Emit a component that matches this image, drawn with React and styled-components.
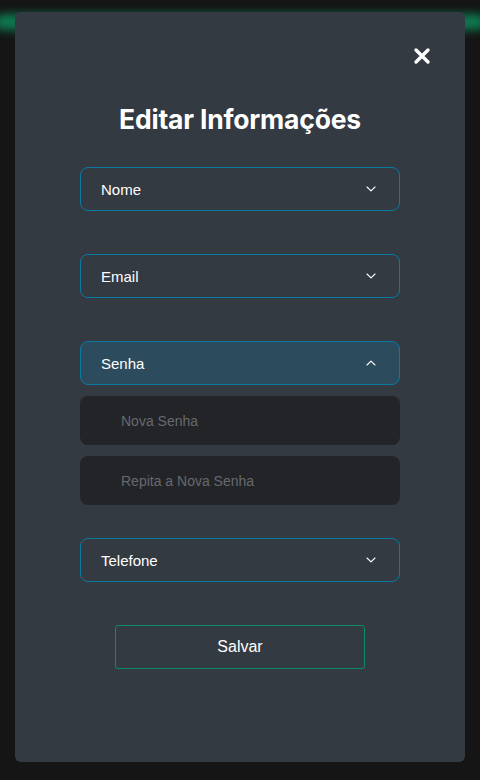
import React, { useState } from 'react';
import styled, { createGlobalStyle } from 'styled-components';

const GlobalStyle = createGlobalStyle`
  * {
    box-sizing: border-box;
  }
  body {
    margin: 0;
    background: #151515;
    font-family: 'Liberation Sans', Arial, sans-serif;
  }
`;

const Page = styled.div`
  position: relative;
  width: 480px;
  height: 780px;
  padding: 12px 15px 18px;
  overflow: hidden;
`;

// green header glow peeking out behind the modal
const Glow = styled.div`
  position: absolute;
  left: -6px;
  right: -6px;
  top: 14px;
  height: 16px;
  border-radius: 10px;
  background: #0e7a50;
  filter: blur(5px);
`;

const Modal = styled.div`
  position: relative;
  display: flex;
  flex-direction: column;
  align-items: center;
  height: 750px;
  background: #343a42;
  border-radius: 6px;
  padding: 31px 30px 0;
`;

const CloseRow = styled.div`
  align-self: stretch;
  display: flex;
  justify-content: flex-end;
`;

const CloseButton = styled.button`
  display: flex;
  align-items: center;
  justify-content: center;
  width: 26px;
  height: 26px;
  padding: 0;
  border: none;
  background: transparent;
  cursor: pointer;
`;

const Title = styled.h1`
  margin: 34px 0 32px;
  font-family: Inter, 'Liberation Sans', sans-serif;
  font-size: 26.5px;
  font-weight: 700;
  color: #ffffff;
  letter-spacing: -0.2px;
`;

const Fields = styled.div`
  width: 320px;
  display: flex;
  flex-direction: column;
`;

const Item = styled.div`
  display: flex;
  flex-direction: column;
  gap: 11px;
  padding-bottom: ${p => (p.$open ? '33px' : '43px')};
`;

const Header = styled.button`
  display: flex;
  align-items: center;
  justify-content: space-between;
  width: 100%;
  height: 44px;
  padding: 0 23px 0 20px;
  border: 1px solid #0a7aa3;
  border-radius: 8px;
  background: ${p => (p.$open ? '#2c4b5d' : 'transparent')};
  color: #ffffff;
  font-family: 'Liberation Sans', Arial, sans-serif;
  font-size: 15px;
  cursor: pointer;
`;

const Input = styled.input`
  width: 100%;
  height: 49px;
  padding: 0 41px;
  border: none;
  border-radius: 8px;
  background: #232427;
  color: #ddd;
  font-family: 'Liberation Sans', Arial, sans-serif;
  font-size: 14px;
  outline: none;

  &::placeholder {
    color: #66696e;
  }
`;

const SaveButton = styled.button`
  width: 250px;
  height: 44px;
  border: 1px solid #0d8a62;
  border-radius: 3px;
  background: transparent;
  color: #ffffff;
  font-family: 'Liberation Sans', Arial, sans-serif;
  font-size: 16px;
  cursor: pointer;
`;

const Chevron = ({ up }) => (
  <svg width="10" height="6" viewBox="0 0 10 6" fill="none">
    <path
      d={up ? 'M1 5 L5 1.2 L9 5' : 'M1 1 L5 4.8 L9 1'}
      stroke="#ffffff"
      strokeWidth="1.1"
      strokeLinecap="round"
      strokeLinejoin="round"
    />
  </svg>
);

const fields = [
  { key: 'nome', label: 'Nome', inputs: ['Novo Nome'] },
  { key: 'email', label: 'Email', inputs: ['Novo Email'] },
  { key: 'senha', label: 'Senha', inputs: ['Nova Senha', 'Repita a Nova Senha'] },
  { key: 'telefone', label: 'Telefone', inputs: ['Novo Telefone'] },
];

export default function App() {
  const [open, setOpen] = useState('senha');

  return (
    <>
      <GlobalStyle />
      <Page>
        <Glow />
        <Modal>
          <CloseRow>
            <CloseButton aria-label="Fechar">
              <svg width="18" height="18" viewBox="0 0 18 18">
                <path d="M3 3 L15 15 M15 3 L3 15" stroke="#fff" strokeWidth="3.4" strokeLinecap="round" />
              </svg>
            </CloseButton>
          </CloseRow>
          <Title>Editar Informações</Title>
          <Fields>
            {fields.map(f => {
              const isOpen = open === f.key;
              return (
                <Item key={f.key} $open={isOpen}>
                  <Header $open={isOpen} onClick={() => setOpen(isOpen ? null : f.key)}>
                    <span>{f.label}</span>
                    <Chevron up={isOpen} />
                  </Header>
                  {isOpen && f.inputs.map(ph => <Input key={ph} placeholder={ph} type="password" />)}
                </Item>
              );
            })}
          </Fields>
          <SaveButton>Salvar</SaveButton>
        </Modal>
      </Page>
    </>
  );
}
